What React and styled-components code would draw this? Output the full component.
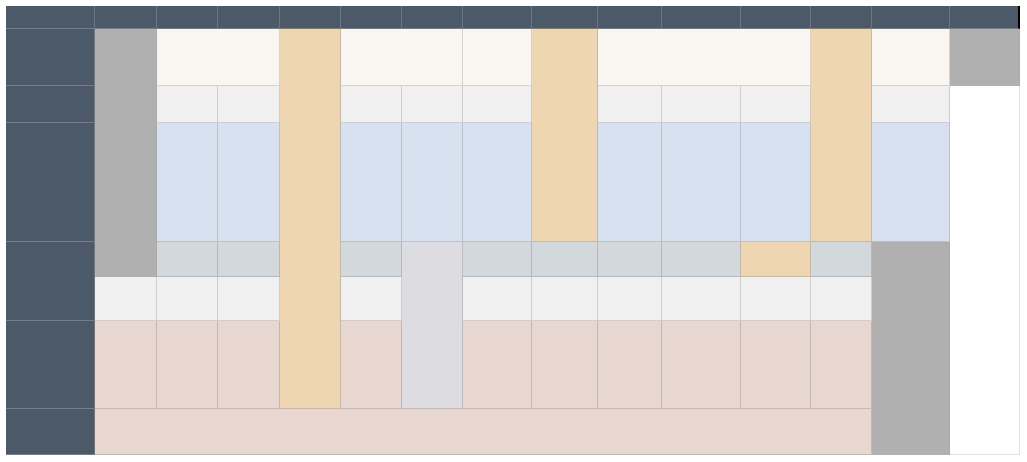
import React from "react";
import styled, { createGlobalStyle, css } from "styled-components";

const Global = createGlobalStyle`
  html, body { margin: 0; padding: 0; background: #ffffff; font-family: "Liberation Sans", Arial, sans-serif; }
`;

const Page = styled.div`
  padding: 6px 0 0 6px;
`;

const Board = styled.div`
  display: grid;
  grid-template-columns: 89px 62px 61px 62px 61px 61px 61px 69px 66px 64px 79px 70px 61px 78px 70px;
  grid-template-rows: 23px 57px 37px 119px 35px 44px 88px 46px;
  width: max-content;
`;

const palette = {
  head: "#4b5969",
  gray: "#b0b0b0",
  cream: "#f9f5f1",
  orange: "#efd6b2",
  light: "#f0f0f0",
  blue: "#d8e1ef",
  slate: "#d3d8dc",
  lilac: "#dddce0",
  pink: "#e8d6d1",
  white: "#ffffff",
};

const Cell = styled.div`
  grid-column: ${(p) => p.$c + 1} / span ${(p) => p.$cs || 1};
  grid-row: ${(p) => p.$r + 1} / span ${(p) => p.$rs || 1};
  background: ${(p) => palette[p.$kind]};
  box-sizing: border-box;
  ${(p) =>
    p.$kind === "head"
      ? css`
          border-right: 1px solid rgba(255, 255, 255, 0.18);
          border-bottom: 1px solid rgba(255, 255, 255, 0.22);
        `
      : p.$kind === "white"
      ? css`
          border-right: 1px solid #e2e2e2;
          border-bottom: 1px solid #e2e2e2;
        `
      : p.$kind === "gray"
      ? css`
          border-right: 1px solid rgba(0, 0, 0, 0.03);
        `
      : css`
          border-right: 1px solid rgba(0, 0, 0, 0.14);
          border-bottom: 1px solid rgba(0, 0, 0, 0.14);
        `}
  ${(p) =>
    p.$edge &&
    css`
      border-right: 2px solid #000;
    `}
`;

const cells = [];
// header row
for (let c = 0; c < 15; c++) cells.push({ c, r: 0, kind: "head", edge: c === 14 });
// left column
[
  [1, 1],
  [2, 1],
  [3, 1],
  [4, 2],
  [6, 1],
  [7, 1],
].forEach(([r, rs]) => cells.push({ c: 0, r, rs, kind: "head" }));

// column 1
cells.push({ c: 1, r: 1, rs: 4, kind: "gray" });
cells.push({ c: 1, r: 5, kind: "light" });
cells.push({ c: 1, r: 6, kind: "pink" });

// row 1 spans
cells.push({ c: 2, r: 1, cs: 2, kind: "cream" });
cells.push({ c: 4, r: 1, rs: 6, kind: "orange" });
cells.push({ c: 5, r: 1, cs: 2, kind: "cream" });
cells.push({ c: 7, r: 1, kind: "cream" });
cells.push({ c: 8, r: 1, rs: 3, kind: "orange" });
cells.push({ c: 9, r: 1, cs: 3, kind: "cream" });
cells.push({ c: 12, r: 1, rs: 3, kind: "orange" });
cells.push({ c: 13, r: 1, kind: "cream" });
cells.push({ c: 14, r: 1, kind: "gray" });
cells.push({ c: 14, r: 2, rs: 6, kind: "white" });

// regular columns rows 2-6
const regular = [2, 3, 5, 6, 7, 9, 10, 11];
regular.forEach((c) => {
  cells.push({ c, r: 2, kind: "light" });
  cells.push({ c, r: 3, kind: "blue" });
  if (c === 6) {
    cells.push({ c, r: 4, rs: 3, kind: "lilac" });
    return;
  }
  cells.push({ c, r: 4, kind: c === 11 ? "orange" : "slate" });
  cells.push({ c, r: 5, kind: "light" });
  cells.push({ c, r: 6, kind: "pink" });
});
[8, 12].forEach((c) => {
  cells.push({ c, r: 4, kind: "slate" });
  cells.push({ c, r: 5, kind: "light" });
  cells.push({ c, r: 6, kind: "pink" });
});
cells.push({ c: 13, r: 2, kind: "light" });
cells.push({ c: 13, r: 3, kind: "blue" });
cells.push({ c: 13, r: 4, rs: 4, kind: "gray" });

// bottom row
cells.push({ c: 1, r: 7, cs: 12, kind: "pink" });

export default function App() {
  return (
    <Page>
      <Global />
      <Board>
        {cells.map((d, i) => (
          <Cell
            key={i}
            $c={d.c}
            $r={d.r}
            $cs={d.cs}
            $rs={d.rs}
            $kind={d.kind}
            $edge={d.edge}
          />
        ))}
      </Board>
    </Page>
  );
}
